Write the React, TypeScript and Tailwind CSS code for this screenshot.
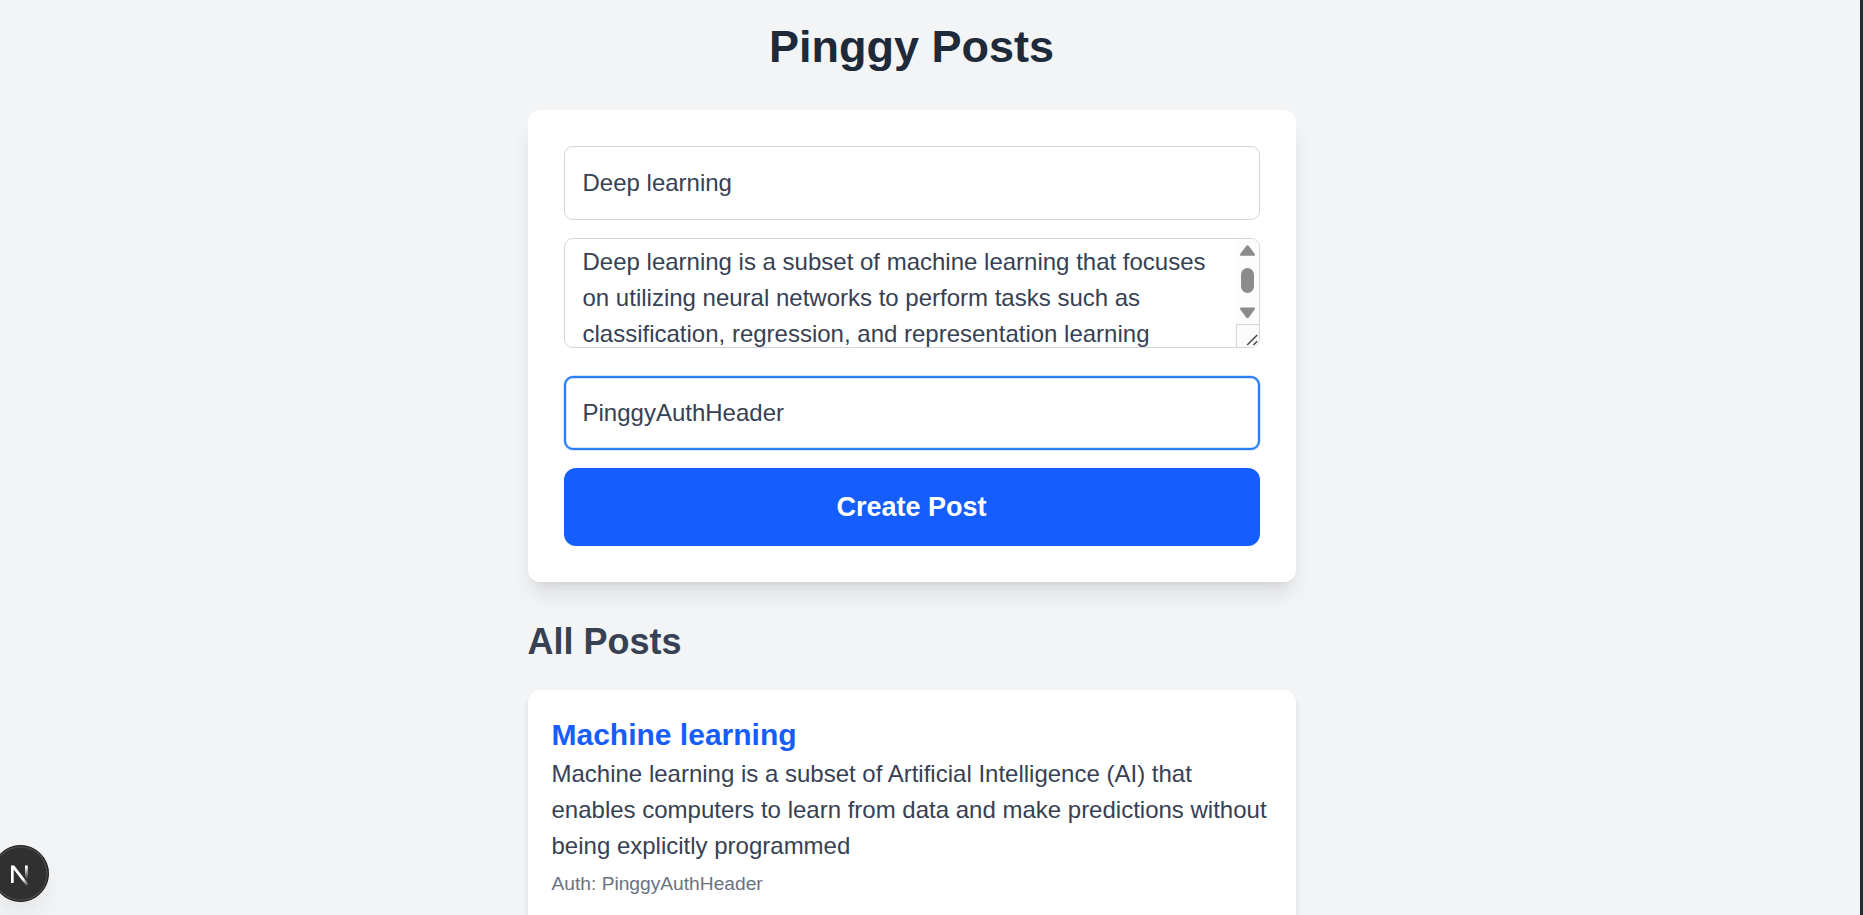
import React from "react";

const fieldBase = "block w-full rounded-[9px] bg-white text-[24px] text-gray-700";

function ScrollRail() {
  return (
    <div className="flex h-full w-[23px] shrink-0 flex-col bg-[#fcfcfc]">
      <svg className="min-h-0 w-[23px] flex-1" viewBox="0 0 23 85" fill="#8b8b8b">
        <path d="M10 7.2Q11.5 5.2 13 7.2L18.6 14.7Q19.8 16.8 17.6 16.8H5.4Q3.2 16.8 4.4 14.7Z" />
        <rect x="5" y="29" width="13" height="25" rx="6.5" />
        <path d="M10 78.3Q11.5 80.3 13 78.3L18.6 70.6Q19.8 68.5 17.6 68.5H5.4Q3.2 68.5 4.4 70.6Z" />
      </svg>
      <div className="h-[23px] w-[23px] border-l border-t border-[#d5d5d5] bg-[#fcfcfc]">
        <svg width="22" height="22" viewBox="0 0 22 22" stroke="#4a4a4a" strokeWidth="1.6">
          <path d="M10.2 20L20.2 10M16.4 20L20.2 16.2" />
        </svg>
      </div>
    </div>
  );
}

function DevBadge() {
  return (
    <div className="absolute bottom-[13px] left-[-8.5px] flex size-[57px] items-center justify-center rounded-full border-[1.5px] border-[#171717] bg-[#303030] shadow-[inset_0_0_0_1.5px_#4a4a4a,0_16px_32px_-8px_rgba(0,0,0,0.1)]">
      <svg width="20" height="24" viewBox="0 0 20 24" fill="none">
        <defs>
          <linearGradient id="stem" x1="0" y1="5" x2="0" y2="17" gradientUnits="userSpaceOnUse">
            <stop stopColor="#fff" />
            <stop offset="1" stopColor="#fff" stopOpacity="0" />
          </linearGradient>
          <linearGradient id="slash" x1="13" y1="17" x2="18" y2="24" gradientUnits="userSpaceOnUse">
            <stop stopColor="#fff" />
            <stop offset="1" stopColor="#fff" stopOpacity="0" />
          </linearGradient>
        </defs>
        <path d="M1 3.5H4.2L18.6 22.2L16.5 24L3.7 7.4V21H1Z" fill="url(#slash)" />
        <path d="M15 3.5H17.8V17H15Z" fill="url(#stem)" />
      </svg>
    </div>
  );
}

export default function App() {
  return (
    <div className="relative flex h-[915px] w-full overflow-hidden border-r-[3px] border-[#292d2e] bg-gray-100 font-['Liberation_Sans',Arial,sans-serif]">
      <main className="w-[1823px] shrink-0 pt-[19px]">
        <div className="mx-auto w-[768px]">
          <h1 className="mb-[35px] text-center text-[45px] leading-[56px] font-bold text-gray-800">Pinggy Posts</h1>
          <form className="flex h-[472px] flex-col rounded-xl bg-white p-9 shadow-[0_15px_22.5px_-4.5px_rgba(0,0,0,0.1),0_6px_9px_-6px_rgba(0,0,0,0.1)]">
            <input readOnly value="Deep learning" className={fieldBase + " h-[74px] border border-gray-300 px-[18px]"} />
            <div className="mt-[18px] flex h-[110px] overflow-hidden rounded-[9px] border border-gray-300 pl-[18px]">
              <p className="flex-1 pt-[5px] text-[24px] leading-9 whitespace-nowrap text-gray-700">
                Deep learning is a subset of machine learning that focuses
                <br />
                on utilizing neural networks to perform tasks such as
                <br />
                classification, regression, and representation learning
              </p>
              <ScrollRail />
            </div>
            <input
              readOnly
              value="PinggyAuthHeader"
              className={fieldBase + " mt-7 h-[74px] border-2 border-[#2b7fff] px-[17px] shadow-[0_0_0_0.5px_#2b7fff66,inset_0_0_0_0.5px_#2b7fff66]"}
            />
            <button type="button" className="mt-[18px] h-[78px] rounded-xl bg-[#155dfc] text-[27px] font-bold text-white">
              Create Post
            </button>
          </form>
          <h2 className="mt-9 text-[36px] leading-[48px] font-bold text-gray-700">All Posts</h2>
          <article className="mt-6 h-[300px] rounded-xl bg-white px-6 pt-6 shadow-[0_6px_9px_-1.5px_rgba(0,0,0,0.1),0_3px_6px_-3px_rgba(0,0,0,0.1)]">
            <h3 className="text-[30px] leading-[42px] font-bold text-[#155dfc]">Machine learning</h3>
            <p className="text-[24px] leading-9 whitespace-nowrap text-gray-700">
              Machine learning is a subset of Artificial Intelligence (AI) that
              <br />
              enables computers to learn from data and make predictions without
              <br />
              being explicitly programmed
            </p>
            <p className="mt-1 text-[19.2px] leading-8 text-gray-500">Auth: PinggyAuthHeader</p>
          </article>
        </div>
      </main>
      <DevBadge />
    </div>
  );
}
